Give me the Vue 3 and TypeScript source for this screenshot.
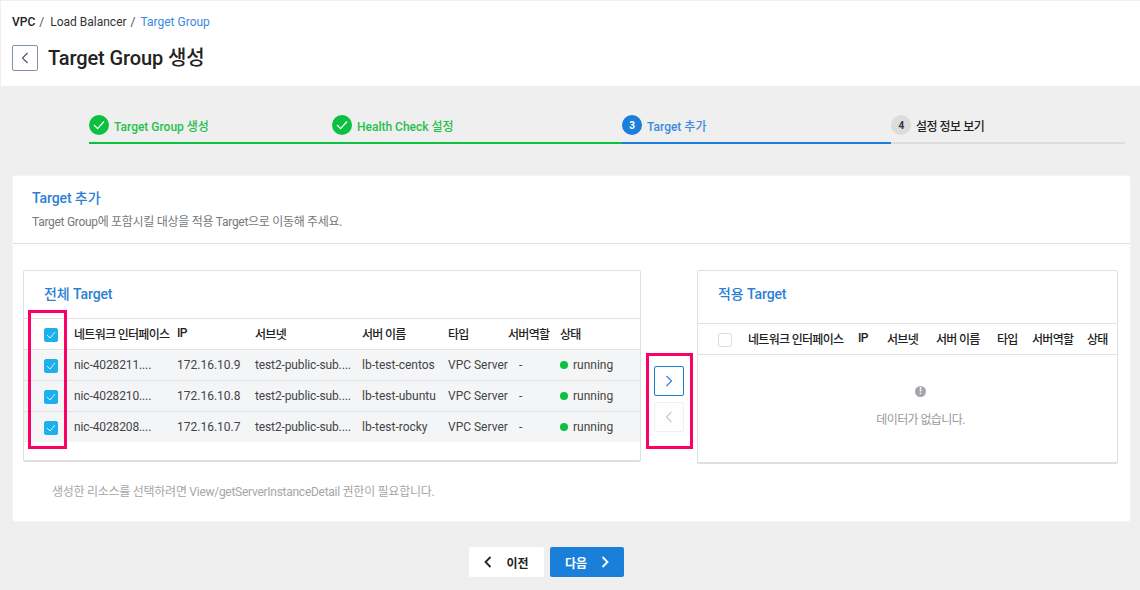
<script setup lang="ts">
interface Row {
  nic: string;
  ip: string;
  subnet: string;
  name: string;
  type: string;
  role: string;
  status: string;
}

const columns = ["네트워크 인터페이스", "IP", "서브넷", "서버 이름", "타입", "서버역할", "상태"];

const steps = [
  { label: "Target Group 생성", state: "done" },
  { label: "Health Check 설정", state: "done" },
  { label: "Target 추가", state: "active", no: 3 },
  { label: "설정 정보 보기", state: "todo", no: 4 },
];

const rows: Row[] = [
  { nic: "nic-4028211....", ip: "172.16.10.9", subnet: "test2-public-sub....", name: "lb-test-centos", type: "VPC Server", role: "-", status: "running" },
  { nic: "nic-4028210....", ip: "172.16.10.8", subnet: "test2-public-sub....", name: "lb-test-ubuntu", type: "VPC Server", role: "-", status: "running" },
  { nic: "nic-4028208....", ip: "172.16.10.7", subnet: "test2-public-sub....", name: "lb-test-rocky", type: "VPC Server", role: "-", status: "running" },
];
</script>

<template>
  <div class="page">
    <header class="top">
      <nav class="crumbs">
        <b>VPC</b><i>/</i><span>Load Balancer</span><i>/</i><span class="now">Target Group</span>
      </nav>
      <div class="title-row">
        <button class="back" type="button" aria-label="뒤로">
          <svg width="8" height="12" viewBox="0 0 8 12"><path d="M6.5 1 1.5 6l5 5" /></svg>
        </button>
        <h1>Target Group 생성</h1>
      </div>
    </header>

    <ol class="stepper">
      <li v-for="step in steps" :key="step.label" :class="['step', step.state]">
        <span class="dot">
          <svg v-if="step.state === 'done'" width="12" height="10" viewBox="0 0 12 10"><path d="M1 5l3.6 3.6L11 1.5" /></svg>
          <template v-else>{{ step.no }}</template>
        </span>
        <span class="step-label">{{ step.label }}</span>
      </li>
    </ol>

    <section class="card">
      <div class="card-head">
        <h2>Target 추가</h2>
        <p>Target Group에 포함시킬 대상을 적용 Target으로 이동해 주세요.</p>
      </div>

      <div class="transfer">
        <div class="panel panel-all">
          <h3>전체 Target</h3>
          <table>
            <colgroup>
              <col style="width: 50px" /><col style="width: 103px" /><col style="width: 78px" /><col style="width: 107px" />
              <col style="width: 86px" /><col style="width: 60px" /><col style="width: 52px" /><col />
            </colgroup>
            <thead>
              <tr>
                <th class="check"><span class="box on"><svg width="10" height="8" viewBox="0 0 10 8"><path d="M1 4l3 3 5-6" /></svg></span></th>
                <th v-for="col in columns" :key="col">{{ col }}</th>
              </tr>
            </thead>
            <tbody>
              <tr v-for="row in rows" :key="row.nic">
                <td class="check"><span class="box on"><svg width="10" height="8" viewBox="0 0 10 8"><path d="M1 4l3 3 5-6" /></svg></span></td>
                <td class="tight">{{ row.nic }}</td>
                <td>{{ row.ip }}</td>
                <td class="tight">{{ row.subnet }}</td>
                <td>{{ row.name }}</td>
                <td>{{ row.type }}</td>
                <td class="role">{{ row.role }}</td>
                <td><span class="run"></span>{{ row.status }}</td>
              </tr>
            </tbody>
          </table>
          <div class="mark mark-checks"></div>
        </div>

        <div class="moves">
          <button class="move" type="button" aria-label="추가">
            <svg width="8" height="12" viewBox="0 0 8 12"><path d="M1.5 1l5 5-5 5" /></svg>
          </button>
          <button class="move off" type="button" aria-label="제거">
            <svg width="8" height="12" viewBox="0 0 8 12"><path d="M6.5 1 1.5 6l5 5" /></svg>
          </button>
          <div class="mark mark-moves"></div>
        </div>

        <div class="panel panel-applied">
          <h3>적용 Target</h3>
          <table>
            <colgroup>
              <col style="width: 50px" /><col style="width: 110px" /><col style="width: 29px" /><col style="width: 49px" />
              <col style="width: 61px" /><col style="width: 35px" /><col style="width: 55px" /><col />
            </colgroup>
            <thead>
              <tr>
                <th class="check"><span class="box"></span></th>
                <th v-for="col in columns" :key="col">{{ col }}</th>
              </tr>
            </thead>
          </table>
          <div class="empty">
            <span class="empty-icon">!</span>
            <p>데이터가 없습니다.</p>
          </div>
        </div>
      </div>

      <p class="note">생성한 리소스를 선택하려면 View/getServerInstanceDetail 권한이 필요합니다.</p>
    </section>

    <footer class="actions">
      <button class="btn prev" type="button">
        <svg width="8" height="12" viewBox="0 0 8 12"><path d="M6.5 1 1.5 6l5 5" /></svg>
        이전
      </button>
      <button class="btn next" type="button">
        다음
        <svg width="8" height="12" viewBox="0 0 8 12"><path d="M1.5 1l5 5-5 5" /></svg>
      </button>
    </footer>
  </div>
</template>

<style>
html,
body {
  margin: 0;
  background: #efefef;
}
</style>

<style scoped>
.page {
  width: 1140px;
  height: 590px;
  overflow: hidden;
  background: #efefef;
  color: #222;
  font-family: Roboto, "Noto Sans CJK KR", sans-serif;
  font-size: 12px;
}

svg path {
  fill: none;
  stroke: currentColor;
  stroke-width: 1.2;
}

.top {
  height: 85px;
  margin: 1px 0 0 1px;
  padding: 14px 0 0 11px;
  box-sizing: border-box;
  background: #fff;
}

.crumbs {
  display: flex;
  height: 15px;
  line-height: 15px;
  color: #333;
}

.crumbs b {
  font-weight: 500;
  color: #222;
}

.crumbs i {
  margin: 0 6px 0 4px;
  font-style: normal;
  color: #555;
}

.crumbs .now {
  color: #3a8ae0;
  margin-left: -1px;
}

.title-row {
  display: flex;
  align-items: center;
  gap: 10px;
  margin-top: 15px;
}

.back {
  display: flex;
  align-items: center;
  justify-content: center;
  width: 26px;
  height: 26px;
  padding: 0;
  border: 1px solid #7f93ad;
  border-radius: 2px;
  background: #fff;
  color: #4a5a70;
}

h1 {
  margin: 0;
  font-size: 20px;
  line-height: 26px;
  font-weight: 500;
  letter-spacing: -0.1px;
  color: #222;
}

.stepper {
  display: flex;
  list-style: none;
  width: 1036px;
  margin: 29px 0 0 89px;
  padding: 0;
}

.step {
  display: flex;
  align-items: center;
  gap: 5px;
  height: 29px;
  padding-bottom: 7px;
  box-sizing: border-box;
  border-bottom: 2px solid #dcdcdc;
  font-weight: 500;
}

.step:nth-child(1) {
  width: 243px;
}

.step:nth-child(2) {
  width: 290px;
}

.step:nth-child(3) {
  width: 269px;
}

.step:nth-child(4) {
  width: 234px;
  letter-spacing: -0.5px;
}

.dot {
  display: flex;
  align-items: center;
  justify-content: center;
  width: 20px;
  height: 20px;
  border-radius: 50%;
  font-size: 10px;
  font-weight: 700;
  background: #dcdcdc;
  color: #333;
}

.done {
  border-bottom-color: #0bc13f;
  color: #1fc14c;
}

.done .dot {
  background: #0bc13f;
  color: #fff;
}

.active {
  border-bottom-color: #1a7fd9;
  color: #3a8ae0;
}

.active .dot {
  background: #1a7fd9;
  color: #fff;
}

.card {
  width: 1119px;
  height: 347px;
  box-sizing: border-box;
  margin: 31px 0 0 12px;
  border: 1px solid #f4f4f4;
  border-radius: 3px;
  background: #fff;
}

.card-head {
  height: 68px;
  box-sizing: border-box;
  padding: 13px 0 0 19px;
  border-bottom: 1px solid #e2e2e2;
}

h2 {
  margin: 0;
  font-size: 14px;
  line-height: 18px;
  font-weight: 500;
  letter-spacing: -0.1px;
  color: #2b7fd6;
}

.card-head p {
  margin: 7px 0 0;
  line-height: 16px;
  letter-spacing: -0.3px;
  color: #777;
}

.transfer {
  display: flex;
  align-items: flex-start;
  margin: 26px 0 0 10px;
}

.panel {
  position: relative;
  flex: none;
  box-sizing: border-box;
  border: 1px solid #e0e0e0;
  border-bottom-width: 2px;
  border-radius: 2px;
  background: #fff;
}

.panel-all {
  width: 618px;
  height: 192px;
}

.panel-applied {
  width: 421px;
  height: 194px;
}

h3 {
  margin: 0;
  padding: 0 0 0 20px;
  height: 47px;
  line-height: 46px;
  font-size: 14px;
  font-weight: 500;
  letter-spacing: -0.1px;
  color: #2b7fd6;
}

.panel-applied h3 {
  height: 52px;
  line-height: 46px;
}

table {
  width: 100%;
  table-layout: fixed;
  border-collapse: collapse;
}

th,
td {
  box-sizing: border-box;
  padding: 0;
  height: 31px;
  text-align: left;
  white-space: nowrap;
}

th {
  padding-bottom: 2px;
  font-weight: 500;
  letter-spacing: -0.7px;
  color: #222;
  border-top: 1px solid #e2e2e2;
  border-bottom: 1px solid #e2e2e2;
}

td {
  color: #444;
  background: #f4f5f7;
  border-bottom: 1px solid #e2e2e2;
}

td.tight {
  letter-spacing: -0.12px;
}

tbody tr:last-child td {
  height: 30px;
  border-bottom: 0;
}

th.check,
td.check {
  padding: 2px 0 0 20px;
}

.box {
  display: flex;
  align-items: center;
  justify-content: center;
  width: 14px;
  height: 14px;
  box-sizing: border-box;
  border: 1px solid #ddd;
  border-radius: 2px;
  background: #fff;
}

.box.on {
  border-color: #1eb0ec;
  background: #1eb0ec;
  color: #d9f3fd;
}

.box.on svg path {
  stroke-width: 1;
}

.role {
  padding-left: 11px;
}

.run {
  display: inline-block;
  width: 8px;
  height: 8px;
  margin-right: 5px;
  border-radius: 50%;
  background: #0bc13f;
}

.moves {
  position: relative;
  display: flex;
  flex-direction: column;
  gap: 6px;
  width: 56px;
  padding: 96px 0 0 13px;
  box-sizing: border-box;
  flex: none;
}

.move {
  display: flex;
  align-items: center;
  justify-content: center;
  width: 30px;
  height: 30px;
  padding: 0;
  border: 1px solid #1a7fd9;
  border-radius: 2px;
  background: #fff;
  color: #3a7fd9;
}

.move.off {
  border-color: #f0f0f0;
  color: #c8c8c8;
}

.empty {
  text-align: center;
  padding: 31px 0 0 26px;
  color: #999;
}

.empty-icon {
  display: block;
  width: 11px;
  height: 11px;
  margin: 0 auto;
  border-radius: 50%;
  background: #a3a6ab;
  color: #fff;
  font-size: 9px;
  font-weight: 700;
  line-height: 11px;
}

.empty p {
  margin: 15px 0 0;
  line-height: 16px;
  letter-spacing: -0.6px;
}

.note {
  margin: 20px 0 0 39px;
  line-height: 16px;
  letter-spacing: -0.27px;
  color: #a6a6a6;
}

.mark {
  position: absolute;
  box-sizing: border-box;
  border: 3px solid #fc0068;
  pointer-events: none;
}

.mark-checks {
  left: 4px;
  top: 39px;
  width: 39px;
  height: 139px;
}

.mark-moves {
  left: 5px;
  top: 83px;
  width: 47px;
  height: 96px;
}

.actions {
  display: flex;
  gap: 6px;
  margin: 25px 0 0 469px;
}

.btn {
  display: flex;
  align-items: center;
  justify-content: center;
  gap: 14px;
  width: 75px;
  height: 30px;
  padding: 0;
  border: 0;
  border-radius: 2px;
  font-family: inherit;
  font-size: 12px;
  font-weight: 700;
}

.prev {
  background: #fff;
  color: #222;
}

.next {
  width: 74px;
  background: #1a7fd9;
  color: #fff;
}

.btn svg path {
  stroke-width: 1.8;
}
</style>
